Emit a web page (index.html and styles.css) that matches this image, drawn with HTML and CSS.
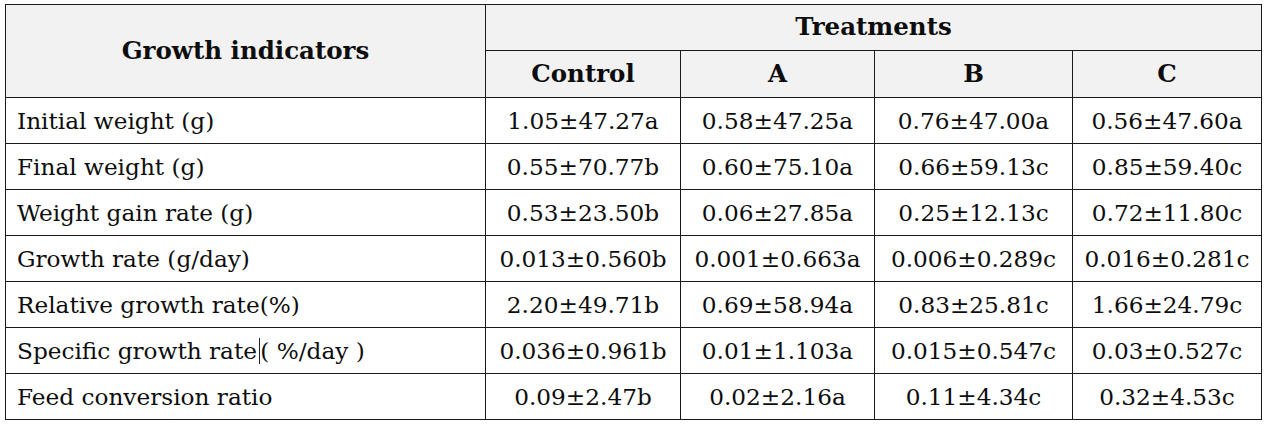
FILE: index.html
```html
<!DOCTYPE html>
<html lang="en">
<head>
<meta charset="utf-8">
<title>Growth indicators</title>
<link rel="stylesheet" href="styles.css">
</head>
<body>
<div class="page">
<table class="grid">
  <colgroup>
    <col class="c-ind"><col class="c-ctl"><col class="c-a"><col class="c-b"><col class="c-c">
  </colgroup>
  <thead>
    <tr class="h1">
      <th rowspan="2" class="ind-h">Growth indicators</th>
      <th colspan="4">Treatments</th>
    </tr>
    <tr class="h2">
      <th>Control</th><th>A</th><th>B</th><th>C</th>
    </tr>
  </thead>
  <tbody>
    <tr><td class="lbl">Initial weight (g)</td><td>1.05±47.27a</td><td>0.58±47.25a</td><td>0.76±47.00a</td><td>0.56±47.60a</td></tr>
    <tr><td class="lbl">Final weight (g)</td><td>0.55±70.77b</td><td>0.60±75.10a</td><td>0.66±59.13c</td><td>0.85±59.40c</td></tr>
    <tr><td class="lbl">Weight gain rate (g)</td><td>0.53±23.50b</td><td>0.06±27.85a</td><td>0.25±12.13c</td><td>0.72±11.80c</td></tr>
    <tr><td class="lbl">Growth rate (g/day)</td><td>0.013±0.560b</td><td>0.001±0.663a</td><td>0.006±0.289c</td><td>0.016±0.281c</td></tr>
    <tr><td class="lbl">Relative growth rate(%)</td><td>2.20±49.71b</td><td>0.69±58.94a</td><td>0.83±25.81c</td><td>1.66±24.79c</td></tr>
    <tr><td class="lbl">Specific growth rate <span class="caret"></span>( %/day )</td><td>0.036±0.961b</td><td>0.01±1.103a</td><td>0.015±0.547c</td><td>0.03±0.527c</td></tr>
    <tr><td class="lbl">Feed conversion ratio</td><td>0.09±2.47b</td><td>0.02±2.16a</td><td>0.11±4.34c</td><td>0.32±4.53c</td></tr>
  </tbody>
</table>
</div>
</body>
</html>
```

FILE: styles.css
```css
html, body {
  margin: 0;
  padding: 0;
  background: #ffffff;
}
.page {
  padding: 4px 0 0 5px;
}
.grid {
  border-collapse: collapse;
  table-layout: fixed;
  width: 1256px;
  font-family: "DejaVu Serif", "Liberation Serif", serif;
  color: #0d0d0d;
}
.c-ind { width: 480px; }
.c-ctl { width: 195px; }
.c-a { width: 194px; }
.c-b { width: 198px; }
.c-c { width: 189px; }
.grid th, .grid td {
  border: 1px solid #1a1a1a;
  padding: 0;
  text-align: center;
  white-space: nowrap;
  overflow: hidden;
  line-height: 1.1;
}
.grid th {
  background: #f2f2f2;
  font-weight: bold;
  font-size: 24.5px;
}
.h1 th { height: 45px; }
.h2 th { height: 46px; }
.grid td {
  height: 45px;
  font-size: 23.2px;
}
.grid td.lbl {
  text-align: left;
  padding-left: 11px;
}
.caret {
  display: inline-block;
  width: 0;
  height: 26px;
  border-left: 1px solid #222;
  vertical-align: -5px;
  margin-left: -5px;
}
```
